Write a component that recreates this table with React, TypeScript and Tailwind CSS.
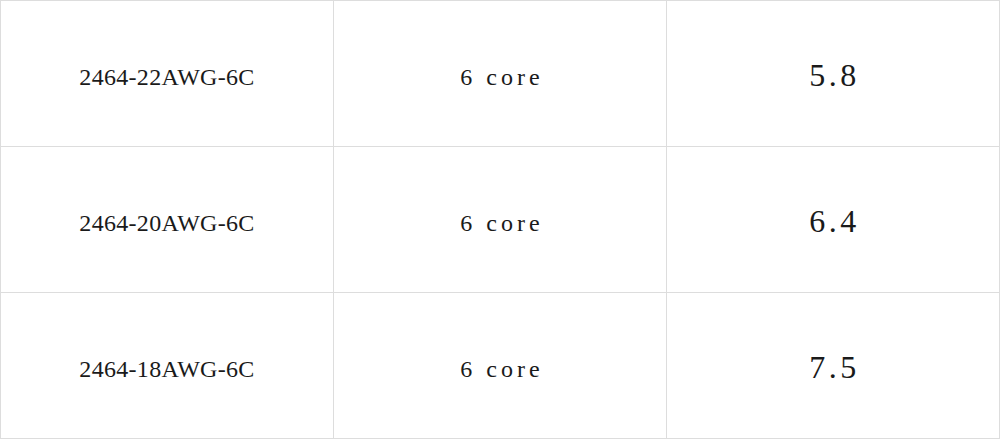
import React from "react";

const rows = [
  { model: "2464-22AWG-6C", core: "6 core", od: "5.8" },
  { model: "2464-20AWG-6C", core: "6 core", od: "6.4" },
  { model: "2464-18AWG-6C", core: "6 core", od: "7.5" },
];

export default function App() {
  return (
    <div className="w-[1000px] h-[439px] bg-white" style={{ fontFamily: '"Liberation Serif", "Noto Sans CJK SC", serif' }}>
      <div className="grid grid-cols-[333px_333px_333px] border-l border-t border-[#dddddd] text-[#1a1a1a]">
        {rows.map((r) => (
          <React.Fragment key={r.model}>
            <div className="h-[146px] border-r border-b border-[#dddddd] flex items-center justify-center pt-[6px] text-[24px] tracking-[0.3px]">
              {r.model}
            </div>
            <div className="h-[146px] border-r border-b border-[#dddddd] flex items-center justify-center pt-[6px] pl-[4px] text-[24px] tracking-[4px]">
              {r.core}
            </div>
            <div className="h-[146px] border-r border-b border-[#dddddd] flex items-center justify-center pt-[2px] pl-[3px] text-[32px] tracking-[3.5px]">
              {r.od}
            </div>
          </React.Fragment>
        ))}
      </div>
    </div>
  );
}
